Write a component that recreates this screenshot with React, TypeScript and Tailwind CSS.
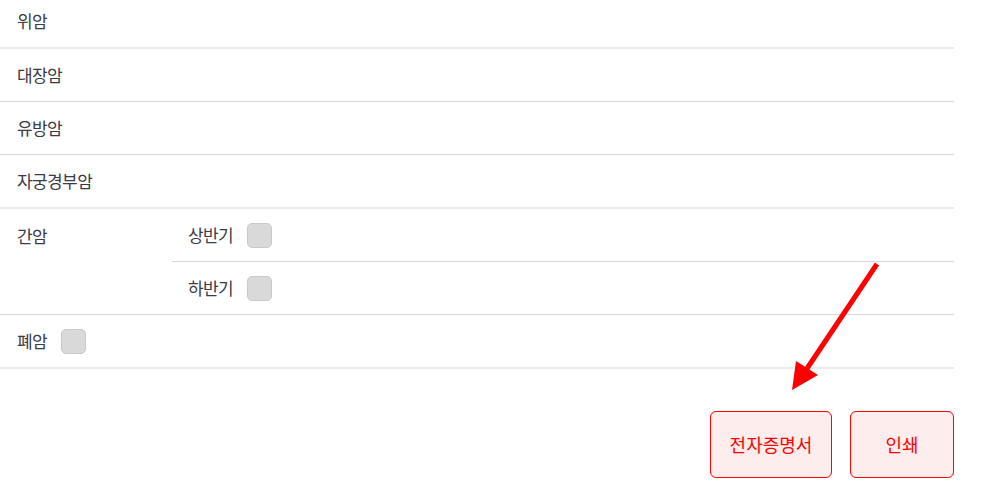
const font = { fontFamily: '"Noto Sans CJK KR", "Noto Sans", sans-serif' };

function Check() {
  return <span className="inline-block w-[25px] h-[25px] rounded-[5px] bg-[#d9d9d9] border border-[#c9c9c9]" />;
}

function Row({ label, children, thick }: { label: string; children?: React.ReactNode; thick?: boolean }) {
  return (
    <div
      className={`flex items-center h-[52px] box-content px-[17px] gap-[14px] text-[17px] tracking-[-0.6px] text-[#3a3a48] ${
        thick ? "border-b-2 border-[#ebebeb]" : "border-b border-[#d9d9d9]"
      }`}
    >
      <span>{label}</span>
      {children}
    </div>
  );
}

export default function App() {
  return (
    <div className="relative w-[1000px] h-[498px] bg-white overflow-hidden" style={font}>
      <div className="w-[954px] -mt-[5px]">
        <Row label="위암" thick />
        <Row label="대장암" />
        <Row label="유방암" />
        <Row label="자궁경부암" thick />
        <div className="flex border-b border-[#d9d9d9] text-[17px] tracking-[-0.6px] text-[#3a3a48]">
          <div className="w-[172px] px-[17px] h-[53px] flex items-center">간암</div>
          <div className="flex-1 flex flex-col">
            <div className="flex items-center h-[53px] px-[16px] gap-[14px] border-b border-[#d9d9d9]">
              <span>상반기</span>
              <Check />
            </div>
            <div className="flex items-center h-[52px] px-[16px] gap-[14px]">
              <span>하반기</span>
              <Check />
            </div>
          </div>
        </div>
        <Row label="폐암" thick>
          <Check />
        </Row>
        <div className="flex justify-end gap-[18px] mt-[42px]">
          <button className="w-[122px] h-[67px] rounded-[6px] border border-[#f00] bg-[#fdeded] text-[#f00] text-[18px]">
            전자증명서
          </button>
          <button className="w-[104px] h-[67px] rounded-[6px] border border-[#f00] bg-[#fdeded] text-[#f00] text-[18px]">
            인쇄
          </button>
        </div>
      </div>
      <svg className="absolute left-0 top-0 pointer-events-none" width="1000" height="498">
        <line x1="877" y1="264" x2="806" y2="370" stroke="#f00" strokeWidth="5" />
        <polygon points="792,390 796,361 818,375" fill="#f00" />
      </svg>
    </div>
  );
}
